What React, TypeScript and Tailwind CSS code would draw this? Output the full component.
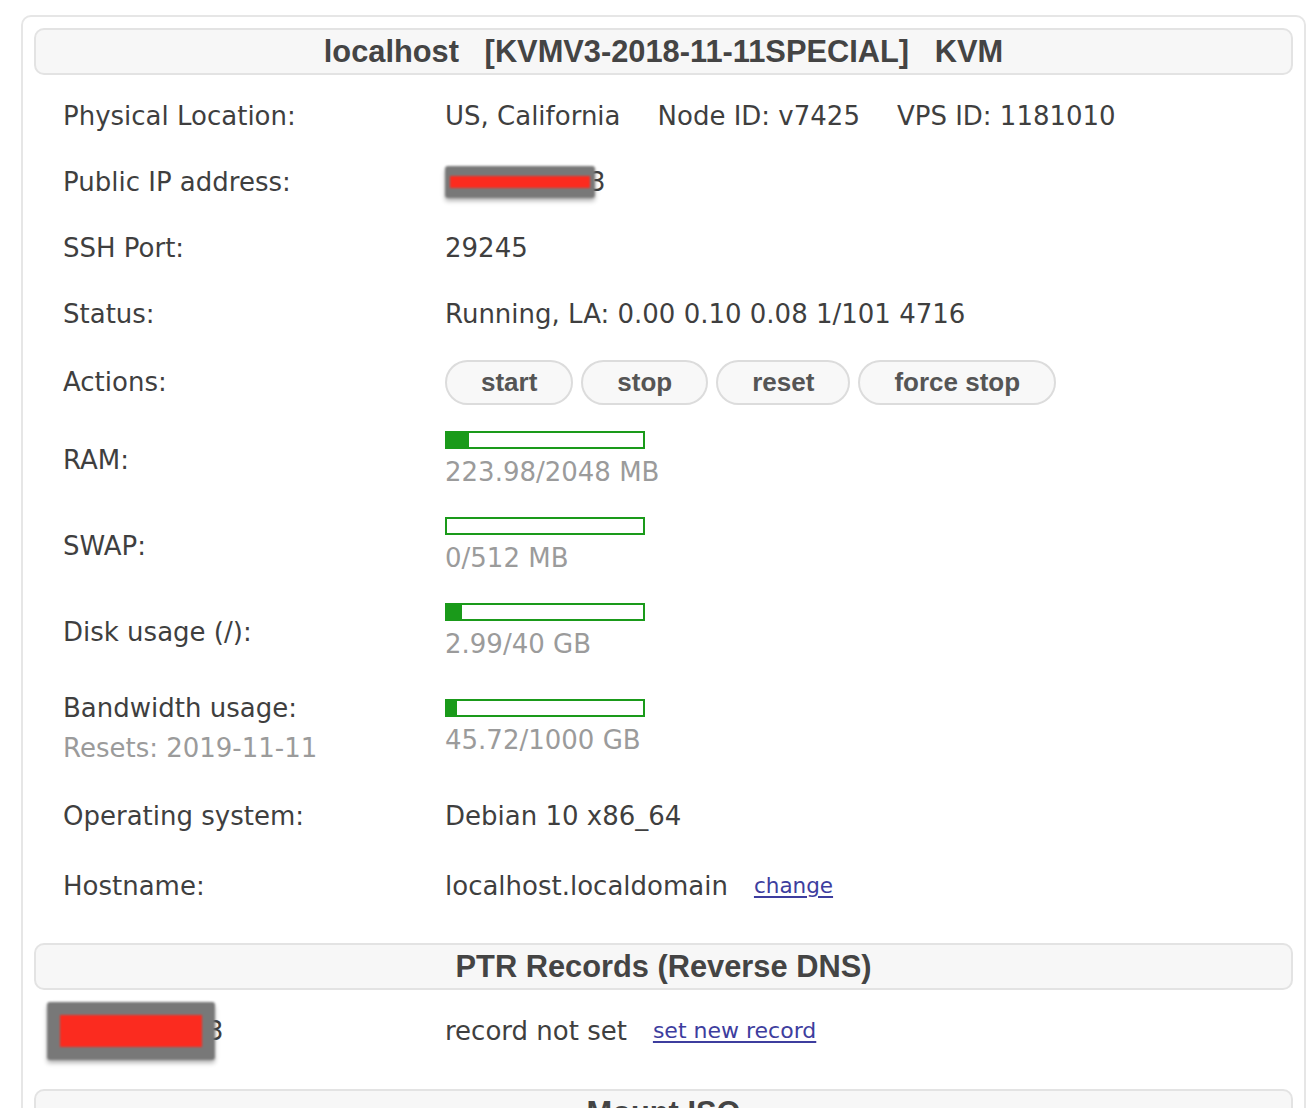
import React from "react";

const body = { fontFamily: '"DejaVu Sans", Verdana, sans-serif' };
const head = { fontFamily: '"Liberation Sans", Arial, sans-serif' };

function Bar({ pct }: { pct: number }) {
  return (
    <div className="h-[18px] w-[200px] border-2 border-[#1a9a1a] bg-white">
      <div className="h-full bg-[#1a9a1a]" style={{ width: `${pct}%` }} />
    </div>
  );
}

function Meter({ pct, text }: { pct: number; text: string }) {
  return (
    <div className="flex flex-col pb-[4px]">
      <Bar pct={pct} />
      <div className="mt-[10px] leading-[26px] text-[#9b9b9b]">{text}</div>
    </div>
  );
}

function Row({ label, h, children }: { label: React.ReactNode; h: string; children: React.ReactNode }) {
  return (
    <div className={`flex items-center pt-[2px] ${h}`}>
      <div className="w-[411px] shrink-0 pl-[29px]">{label}</div>
      <div className="flex items-center">{children}</div>
    </div>
  );
}

function Header({ children }: { children: React.ReactNode }) {
  return (
    <div
      className="flex h-[47px] items-center justify-center rounded-[10px] border-2 border-[#e3e3e3] bg-[#f7f7f7] pt-[2px] text-[30.8px] font-bold text-[#444] whitespace-pre"
      style={head}
    >
      {children}
    </div>
  );
}

function Btn({ children }: { children: React.ReactNode }) {
  return (
    <button
      className="h-[45px] rounded-full border-2 border-[#dcdcdc] bg-[#f8f8f8] px-[34px] text-[26px] font-bold text-[#555] leading-none"
      style={head}
    >
      {children}
    </button>
  );
}

function Redact({ w, h, pad }: { w: string; h: string; pad: string }) {
  return (
    <div className={`${w} ${h} ${pad} flex rounded-[3px] bg-[#787878] blur-[1px] shadow-[0_3px_4px_rgba(0,0,0,0.3)]`}>
      <div className="flex-1 bg-[#fb2b1f]" />
    </div>
  );
}

export default function App() {
  return (
    <div className="min-h-[1108px] overflow-hidden bg-white text-[26px] text-[#3f3f3f]" style={body}>
      <div className="ml-[21px] mt-[15px] w-[1285px] rounded-[10px] border-2 border-[#e6e6e6] px-[11px] pt-[11px] pb-[40px]">
        <Header>{"localhost   [KVMV3-2018-11-11SPECIAL]   KVM"}</Header>
        <div className="mt-[7px] leading-[30px]">
          <Row label="Physical Location:" h="h-[66px]">
            <div className="flex gap-[37px]">
              <span>US, California</span>
              <span>Node ID: v7425</span>
              <span>VPS ID: 1181010</span>
            </div>
          </Row>
          <Row label="Public IP address:" h="h-[66px]">
            <div className="flex items-center">
              <Redact w="w-[150px]" h="h-[32px]" pad="px-[5px] py-[10px]" />
              <span className="-ml-[6px]">3</span>
            </div>
          </Row>
          <Row label="SSH Port:" h="h-[66px]">
            <span>29245</span>
          </Row>
          <Row label="Status:" h="h-[66px]">
            <span>Running, LA: 0.00 0.10 0.08 1/101 4716</span>
          </Row>
          <Row label="Actions:" h="h-[70px]">
            <div className="flex gap-[8px]">
              <Btn>start</Btn>
              <Btn>stop</Btn>
              <Btn>reset</Btn>
              <Btn>force stop</Btn>
            </div>
          </Row>
          <Row label="RAM:" h="h-[86px]">
            <Meter pct={11} text="223.98/2048 MB" />
          </Row>
          <Row label="SWAP:" h="h-[86px]">
            <Meter pct={0} text="0/512 MB" />
          </Row>
          <Row label="Disk usage (/):" h="h-[86px]">
            <Meter pct={7.5} text="2.99/40 GB" />
          </Row>
          <Row
            label={
              <div className="flex flex-col gap-[10px]">
                <span>Bandwidth usage:</span>
                <span className="text-[#9b9b9b]">Resets: 2019-11-11</span>
              </div>
            }
            h="h-[106px]"
          >
            <Meter pct={5} text="45.72/1000 GB" />
          </Row>
          <Row label="Operating system:" h="h-[70px]">
            <span>Debian 10 x86_64</span>
          </Row>
          <Row label="Hostname:" h="h-[70px]">
            <span>localhost.localdomain</span>
            <a className="ml-[26px] text-[21.5px] text-[#3d3d9e] underline underline-offset-[3px]" href="#">
              change
            </a>
          </Row>
        </div>
        <div className="mt-[23px]">
          <Header>PTR Records (Reverse DNS)</Header>
        </div>
        <div className="mt-[7px] flex h-[66px] items-center pt-[2px] leading-[30px]">
          <div className="flex w-[411px] shrink-0 items-center pl-[13px]">
            <Redact w="w-[168px]" h="h-[58px]" pad="px-[13px] py-[13px]" />
            <span className="-ml-[8px]">3</span>
          </div>
          <span>record not set</span>
          <a className="ml-[26px] text-[22px] text-[#3d3d9e] underline underline-offset-[3px]" href="#">
            set new record
          </a>
        </div>
        <div className="mt-[26px]">
          <Header>Mount ISO</Header>
        </div>
      </div>
    </div>
  );
}
